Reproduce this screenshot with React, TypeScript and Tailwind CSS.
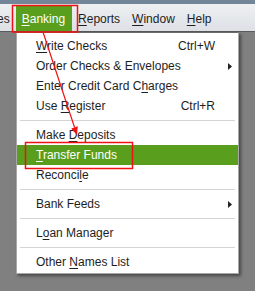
import type { ReactNode } from 'react';

type Row =
  | { kind: 'sep' }
  | { kind: 'item'; label: ReactNode; shortcut?: string; submenu?: boolean; active?: boolean };

const rows: Row[] = [
  { kind: 'item', label: <><u>W</u>rite Checks</>, shortcut: 'Ctrl+W' },
  { kind: 'item', label: 'Order Checks & Envelopes', submenu: true },
  { kind: 'item', label: <>Enter Credit Card C<u>h</u>arges</> },
  { kind: 'item', label: <>Use <u>R</u>egister</>, shortcut: 'Ctrl+R' },
  { kind: 'sep' },
  { kind: 'item', label: <>Make <u>D</u>eposits</> },
  { kind: 'item', label: <><u>T</u>ransfer Funds</>, active: true },
  { kind: 'item', label: <>Reconci<u>l</u>e</> },
  { kind: 'sep' },
  { kind: 'item', label: 'Bank Feeds', submenu: true },
  { kind: 'sep' },
  { kind: 'item', label: <>L<u>o</u>an Manager</> },
  { kind: 'sep' },
  { kind: 'item', label: <>Other <u>N</u>ames List</> },
];

function SubArrow({ light }: { light?: boolean }) {
  return (
    <svg width="4" height="7" viewBox="0 0 4 7">
      <polygon points="0,0 4,3.5 0,7" fill={light ? '#fff' : '#222'} />
    </svg>
  );
}

function MenuRow({ row }: { row: Row }) {
  if (row.kind === 'sep') {
    return (
      <div className="h-[9px] flex items-center px-[3px]">
        <div className="h-px w-full bg-[#d4d4d4]" />
      </div>
    );
  }
  return (
    <div
      className={`h-[20px] flex items-center pl-[19px] ${row.active ? 'bg-[#5a9e1e] text-white' : 'text-[#1e1e1e]'}`}
    >
      <span className="flex-1 whitespace-nowrap">{row.label}</span>
      {row.shortcut && <span className="whitespace-nowrap">{row.shortcut}</span>}
      <span className="w-[23px] h-full flex items-center pl-[13px]">
        {row.submenu && <SubArrow light={row.active} />}
      </span>
    </div>
  );
}

export default function App() {
  return (
    <div
      className="relative w-[255px] h-[291px] overflow-hidden bg-[#808080] text-[12px] leading-none [&_u]:underline-offset-[2px]"
      style={{ fontFamily: '"Liberation Sans", Arial, sans-serif' }}
    >
      <div className="h-[4px] bg-[#738699]" />
      <div className="h-[28px] flex items-end border-b border-[#5a5a5a] bg-gradient-to-b from-[#eef0f2] to-[#dde1e5] text-[#1e1e1e]">
        <span className="h-[25px] flex items-center ml-[-3px] pr-[6px]">es</span>
        <span className="h-[25px] flex items-center pl-[6px] pr-[7px] bg-[#5a9e1e] text-white">
          <u>B</u>anking
        </span>
        <span className="h-[25px] flex items-center px-[6px]">
          <u>R</u>eports
        </span>
        <span className="h-[25px] flex items-center px-[6px]">
          <u>W</u>indow
        </span>
        <span className="h-[25px] flex items-center px-[6px]">
          <u>H</u>elp
        </span>
      </div>

      <div className="ml-[16px] w-[223px] bg-white border border-[#a8a8a8] border-t-[#6a6a6a] pt-[3px] pb-px shadow-[2px_2px_3px_rgba(0,0,0,0.45)]">
        {rows.map((row, i) => (
          <MenuRow key={i} row={row} />
        ))}
      </div>

      {/* red annotation marks */}
      <svg className="absolute inset-0 pointer-events-none" width="255" height="291" viewBox="0 0 255 291">
        <rect x="12.5" y="5.5" width="65" height="26.5" fill="none" stroke="#f01212" strokeWidth="1.5" />
        <rect x="25.5" y="142.5" width="107" height="26" fill="none" stroke="#f01212" strokeWidth="1.5" />
        <line x1="43" y1="32" x2="74.6" y2="127.5" stroke="#f01212" strokeWidth="1.2" />
        <polygon points="77,135 71.2,128.5 77.8,126.3" fill="#f01212" />
      </svg>
    </div>
  );
}
